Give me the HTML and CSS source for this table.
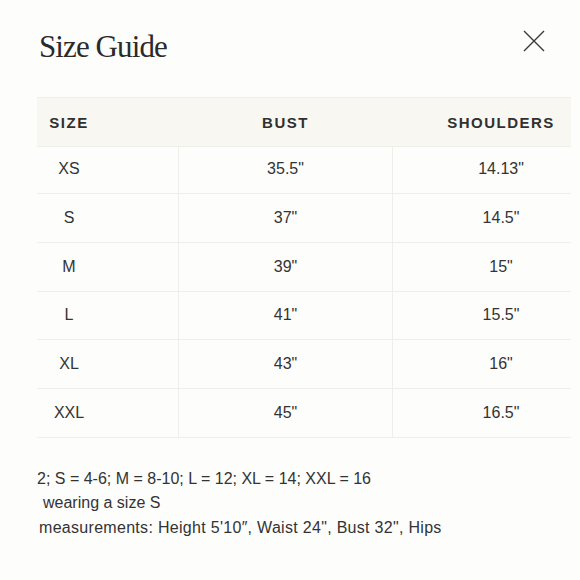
FILE: index.html
```html
<!DOCTYPE html>
<html lang="en">
<head>
<meta charset="utf-8">
<title>Size Guide</title>
<link rel="stylesheet" href="styles.css">
</head>
<body>
<div class="modal">
  <div class="top">
    <h1 class="title">Size Guide</h1>
    <button class="close" aria-label="Close">
      <svg width="22" height="22" viewBox="0 0 22 22"><path d="M1 1 L21 21 M21 1 L1 21" stroke="#3a3a3a" stroke-width="1.4" fill="none"/></svg>
    </button>
  </div>
  <div class="table">
    <div class="row hrow"><div class="c c1">SIZE</div><div class="c c2">BUST</div><div class="c c3">SHOULDERS</div></div>
    <div class="row"><div class="c c1">XS</div><div class="c c2">35.5"</div><div class="c c3">14.13"</div></div>
    <div class="row"><div class="c c1">S</div><div class="c c2">37"</div><div class="c c3">14.5"</div></div>
    <div class="row"><div class="c c1">M</div><div class="c c2">39"</div><div class="c c3">15"</div></div>
    <div class="row"><div class="c c1">L</div><div class="c c2">41"</div><div class="c c3">15.5"</div></div>
    <div class="row"><div class="c c1">XL</div><div class="c c2">43"</div><div class="c c3">16"</div></div>
    <div class="row"><div class="c c1">XXL</div><div class="c c2">45"</div><div class="c c3">16.5"</div></div>
  </div>
  <div class="notes">
    <p class="n1">2; S = 4-6; M = 8-10; L = 12; XL = 14; XXL = 16</p>
    <p class="n2">wearing a size S</p>
    <p class="n3">measurements: Height 5'10″, Waist 24", Bust 32", Hips</p>
  </div>
</div>
</body>
</html>
```
FILE: styles.css
```css
html, body {
  margin: 0;
  padding: 0;
  background: #fdfdfc;
}
.modal {
  width: 580px;
  height: 580px;
  padding: 0 0 0 37px;
  box-sizing: border-box;
  color: #2e2e2e;
}
.top {
  display: flex;
  justify-content: space-between;
  align-items: flex-start;
  height: 97px;
  padding-right: 35px;
  padding-top: 30px;
  box-sizing: border-box;
}
.title {
  margin: 0 0 0 2px;
  font-family: "Liberation Serif", "DejaVu Serif", serif;
  font-weight: 400;
  font-size: 31px;
  line-height: 34px;
  color: #2a2a2a;
  letter-spacing: -0.9px;
}
.close {
  border: 0;
  background: none;
  padding: 0;
  margin-top: 0;
  width: 22px;
  height: 22px;
  display: flex;
}
.table {
  width: 534px;
  display: grid;
  grid-template-columns: 141px 215px 178px;
  grid-auto-rows: 48.67px;
  font-family: "Liberation Sans", Arial, sans-serif;
}
.row {
  display: contents;
}
.c {
  display: flex;
  align-items: center;
  justify-content: center;
  border-bottom: 1px solid #efefea;
  font-size: 16px;
  color: #333;
}
.c1 { padding-right: 77px; }
.c2 { border-left: 1px solid #efefea; border-right: 1px solid #efefea; }
.c3 { padding-left: 38px; }
.hrow .c {
  background: #f8f7f2;
  border-top: 1px solid #efefea;
  border-left: 0;
  border-right: 0;
  font-weight: 700;
  font-size: 15px;
  letter-spacing: 1.5px;
  color: #303030;
  height: 48px;
}
.notes {
  padding-top: 29px;
  font-family: "Liberation Sans", Arial, sans-serif;
  font-size: 16px;
  line-height: 24.5px;
  color: #333;
}
.notes p { margin: 0; }
.n2 { padding-left: 6px; }
.n3 { padding-left: 2px; letter-spacing: 0.3px; }
```
